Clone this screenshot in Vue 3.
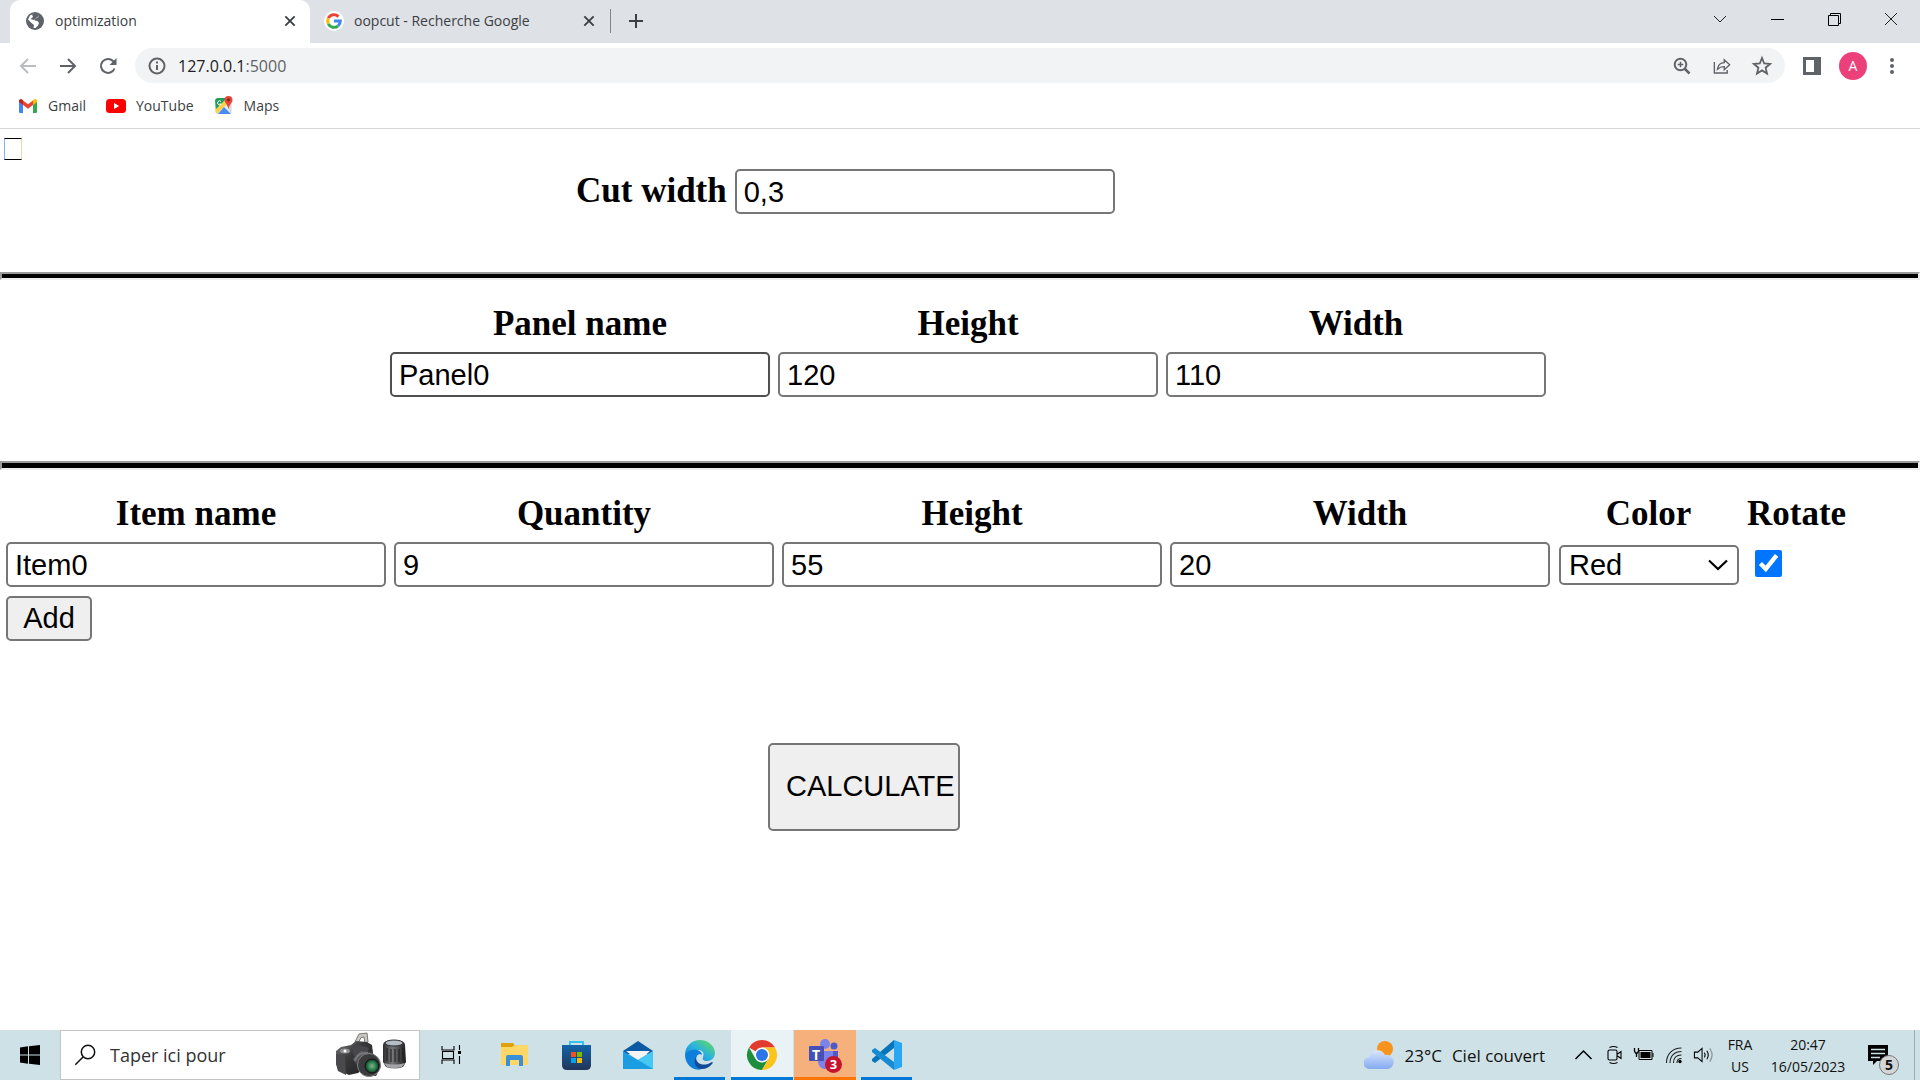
<script setup>
import { ref } from 'vue'

const cutWidth = ref('0,3')
const panel = ref({ name: 'Panel0', height: '120', width: '110' })
const item = ref({ name: 'Item0', quantity: '9', height: '55', width: '20', color: 'Red', rotate: true })
const search = ref('')
const colors = ['Red', 'Green', 'Blue']
</script>

<template>
  <div class="desktop">
    <header class="browser">
      <div class="tabs">
        <div class="tab active">
          <svg class="fav" viewBox="0 0 20 20"><circle cx="10" cy="10" r="9" fill="#5f6368" /><path d="M9 2.6 12.5 2.5 14 5l-2 2-2 .5L9.500 9.500l3 .5 1.500 2-1 2.500-2.500 2.500H8.500l.5-3-2.500-2L3 8.500 5 4.500z" fill="#fff" /><path d="M10 1.500 7 3.500 8 6 5.500 8 9 9 11 7l3-2-1-2.500z" fill="#5f6368" /></svg>
          <span class="title">optimization</span>
          <button class="bare close" aria-label="Close tab"><svg viewBox="0 0 12 12"><path d="m2 2 8 8M10 2l-8 8" stroke="#3c4043" stroke-width="1.600" /></svg></button>
        </div>
        <div class="tab second">
          <svg class="fav" viewBox="0 0 20 20"><circle cx="10" cy="10" r="10" fill="#fff" /><g fill="none" stroke-width="3"><path d="M4.300 7.200A6.300 6.300 0 0 1 14.500 5.600" stroke="#ea4335" /><path d="M4.300 7.200a6.300 6.300 0 0 0 0 5.600" stroke="#fbbc05" /><path d="M4.300 12.800a6.300 6.300 0 0 0 9.800 2" stroke="#34a853" /><path d="M10 10h6.300c0 2-.8 3.700-2.200 4.800" stroke="#4285f4" /></g></svg>
          <span class="title">oopcut - Recherche Google</span>
          <button class="bare close" aria-label="Close tab"><svg viewBox="0 0 12 12"><path d="m2 2 8 8M10 2l-8 8" stroke="#3c4043" stroke-width="1.600" /></svg></button>
        </div>
        <button class="bare plus" aria-label="New tab"><svg viewBox="0 0 16 16"><path d="M8 1v14M1 8h14" stroke="#3c4043" stroke-width="2" /></svg></button>
        <div class="window-controls">
          <button class="bare" aria-label="Search tabs"><svg viewBox="0 0 14 14"><path d="m1 4 6 6 6-6" fill="none" stroke="#222" /></svg></button>
          <button class="bare" aria-label="Minimize"><svg viewBox="0 0 14 14"><path d="M1 7.500h13" stroke="#000" /></svg></button>
          <button class="bare" aria-label="Restore"><svg viewBox="0 0 14 14"><path d="M1.500 3.500h10v10h-10zM3.500 3V1.500h10v10H12" fill="none" stroke="#000" /></svg></button>
          <button class="bare" aria-label="Close"><svg viewBox="0 0 14 14"><path d="m1 1 12 12M13 1 1 13" stroke="#222" /></svg></button>
        </div>
      </div>

      <div class="toolbar">
        <nav class="nav">
          <button class="bare" aria-label="Back"><svg viewBox="0 0 18 18"><path d="M17 9H2M9 2 2 9l7 7" fill="none" stroke="#babcbe" stroke-width="2" /></svg></button>
          <button class="bare" aria-label="Forward"><svg viewBox="0 0 18 18"><path d="M1 9h15M9 2l7 7-7 7" fill="none" stroke="#5f6368" stroke-width="2" /></svg></button>
          <button class="bare" aria-label="Reload"><svg viewBox="0 0 18 18"><path d="M15.500 11.500A7 7 0 1 1 14 4l1.500 2" fill="none" stroke="#5f6368" stroke-width="2" /><path d="M17.500 1v7h-7z" fill="#5f6368" /></svg></button>
        </nav>
        <div class="omnibox">
          <svg class="i17" viewBox="0 0 18 18"><circle cx="9" cy="9" r="7.500" fill="none" stroke="#5f6368" stroke-width="2" /><path d="M9 8v5M9 4.500v2" stroke="#5f6368" stroke-width="2" /></svg>
          <span class="url">127.0.0.1<span class="port">:5000</span></span>
          <div class="actions">
            <button class="bare" aria-label="Zoom"><svg viewBox="0 0 18 18"><circle cx="7.500" cy="7.500" r="5.800" fill="none" stroke="#5f6368" stroke-width="2" /><path d="m11.500 11.500 5 5" stroke="#5f6368" stroke-width="2.500" /><path d="M7.500 4.700v5.600M4.700 7.500h5.600" stroke="#5f6368" stroke-width="1.500" /></svg></button>
            <button class="bare" aria-label="Share"><svg viewBox="0 0 20 18"><path d="M1.500 4.500v12.300h14.300v-3.300" fill="none" stroke="#5f6368" stroke-width="1.500" /><path d="M5 12.500C5.500 8 8.500 5.500 12.500 5.300V2l6 5.700-6 5.500V9.700C9 9.700 7 10.500 5 12.500z" fill="none" stroke="#5f6368" stroke-width="1.500" /></svg></button>
            <button class="bare" aria-label="Bookmark"><svg viewBox="0 0 18 18"><path d="m9 1 2.200 5.500 5.900.4-4.500 3.800 1.400 5.800L9 13.400l-5 3.100 1.400-5.800L.9 6.900l5.900-.4z" fill="none" stroke="#5f6368" stroke-width="1.800" /></svg></button>
          </div>
        </div>
        <button class="bare side" aria-label="Side panel"><svg viewBox="0 0 18 18"><path d="M0 0h18v18H0zM3 3v12h8V3z" fill="#5f6368" fill-rule="evenodd" /></svg></button>
        <button class="bare avatar" aria-label="Profile">A</button>
        <button class="bare dots" aria-label="Menu"><svg viewBox="0 0 18 18"><g fill="#5f6368"><circle cx="9" cy="3" r="2" /><circle cx="9" cy="9" r="2" /><circle cx="9" cy="15" r="2" /></g></svg></button>
      </div>

      <nav class="bookmarks">
        <a href="#gmail"><svg viewBox="0 0 20 20"><path d="M1 4.500 5 7v10H2.300Q1 17 1 15.700z" fill="#4285f4" /><path d="M19 4.500 15 7v10h2.700q1.300 0 1.300-1.300z" fill="#34a853" /><path d="M5 4.500 10 8.300l5-3.800V9l-5 3.800L5 9z" fill="#ea4335" /><path d="M1 6V5c0-2 2-2.700 3.500-1.300L5 4.200V9L1 6z" fill="#c5221f" /><path d="M19 6V5c0-2-2-2.700-3.500-1.300l-.5.5V9l4-3z" fill="#fbbc04" /></svg>Gmail</a>
        <a href="#youtube"><svg viewBox="0 0 20 20"><rect y="3" width="20" height="14" rx="3.500" fill="#f00" /><path d="m8 7 5.200 3L8 13z" fill="#fff" /></svg>YouTube</a>
        <a href="#maps"><svg viewBox="0 0 20 20"><rect x="1" y="2" width="17" height="16" rx="2" fill="#e8eaed" /><path d="M3 2h10L2 15 1 4z" fill="#1e9e5a" /><path d="m1 14 11-11 3 3L3 18z" fill="#fdd148" /><path d="m4 18 6-7 7 7z" fill="#4a8cf5" /><path d="m12 9 5-1v9z" fill="#d5d8dc" /><path d="M14.500 0a4 4 0 0 1 4 4c0 3-3 4-4 9-1-5-4-6-4-9a4 4 0 0 1 4-4z" fill="#e4463a" /><circle cx="14.500" cy="4" r="1.400" fill="#7a211b" /><path d="M7 5.500A2 2 0 1 0 7.200 8H5.500" fill="none" stroke="#fff" /></svg>Maps</a>
      </nav>
    </header>

    <main class="page">
      <span class="missing-glyph" aria-hidden="true"></span>
      <div class="cut">
        <label for="cut">Cut width</label>
        <input id="cut" v-model="cutWidth" class="field" type="text">
      </div>

      <hr>

      <table class="panels">
        <thead>
          <tr>
            <th><label for="p-name">Panel name</label></th>
            <th><label for="p-height">Height</label></th>
            <th><label for="p-width">Width</label></th>
          </tr>
        </thead>
        <tbody>
          <tr>
            <td><input id="p-name" v-model="panel.name" class="field hovered" type="text"></td>
            <td><input id="p-height" v-model="panel.height" class="field" type="text"></td>
            <td><input id="p-width" v-model="panel.width" class="field" type="text"></td>
          </tr>
        </tbody>
      </table>

      <hr class="thick">

      <table class="items">
        <thead>
          <tr>
            <th><label for="i-name">Item name</label></th>
            <th><label for="i-quantity">Quantity</label></th>
            <th><label for="i-height">Height</label></th>
            <th><label for="i-width">Width</label></th>
            <th><label for="i-color">Color</label></th>
            <th><label for="i-rotate">Rotate</label></th>
          </tr>
        </thead>
        <tbody>
          <tr>
            <td><input id="i-name" v-model="item.name" class="field" type="text"></td>
            <td><input id="i-quantity" v-model="item.quantity" class="field" type="text"></td>
            <td><input id="i-height" v-model="item.height" class="field" type="text"></td>
            <td><input id="i-width" v-model="item.width" class="field" type="text"></td>
            <td>
              <div class="select-wrap">
                <select id="i-color" v-model="item.color">
                  <option v-for="c in colors" :key="c">{{ c }}</option>
                </select>
                <svg viewBox="0 0 20 12"><path d="m1 1.500 9 8.500 9-8.500" fill="none" stroke="#000" stroke-width="2.200" /></svg>
              </div>
            </td>
            <td><input id="i-rotate" v-model="item.rotate" class="check" type="checkbox"></td>
          </tr>
          <tr>
            <td colspan="6"><button class="btn add" type="button">Add</button></td>
          </tr>
        </tbody>
      </table>

      <button class="btn calculate" type="button">CALCULATE</button>
    </main>

    <footer class="taskbar">
      <button class="bare start" aria-label="Start"><svg viewBox="0 0 20 20"><path d="m0 2.500 8-1.200v8.200H0zM9 1.200 20 0v9.500H9zM0 10.500h8v8.200l-8-1.200zM9 10.500h11V20L9 18.800z" /></svg></button>
      <div class="searchbox">
        <svg class="lens" viewBox="0 0 22 22"><circle cx="14" cy="8" r="6.700" fill="none" stroke="#111" stroke-width="1.500" /><path d="m9.300 12.700-8 8" stroke="#111" stroke-width="1.500" /></svg>
        <input v-model="search" type="text" placeholder="Taper ici pour" aria-label="Taper ici pour">
        <svg class="camera" viewBox="0 0 72 46">
          <defs>
            <linearGradient id="body" x1="0" y1="0" x2="1" y2="1"><stop offset="0" stop-color="#7a7a7e" /><stop offset=".4" stop-color="#3a3a3d" /><stop offset="1" stop-color="#1c1c1e" /></linearGradient>
            <linearGradient id="barrel" x1="0" x2="1"><stop offset="0" stop-color="#2d2d2f" /><stop offset=".4" stop-color="#77777b" /><stop offset="1" stop-color="#1c1c1d" /></linearGradient>
            <radialGradient id="glass"><stop offset="0" stop-color="#7bb58d" /><stop offset=".6" stop-color="#2a7c4a" /><stop offset="1" stop-color="#10331f" /></radialGradient>
          </defs>
          <path d="m20 10 4-8 8-1 1 9-3 1-1-6-3 .5-3 6z" fill="#c9c8c2" stroke="#77766f" />
          <path d="m1 19 5-4 10-2 5-4 11 1 5 3 1 8-1 10-14 10-9 2-11-5-2-7z" fill="url(#body)" />
          <path d="m1 22 9 2 1 19-8-4-2-7z" fill="#4a4a4e" />
          <path d="M17 16q8-5 17 0l-3 8H19z" fill="#48484c" />
          <ellipse cx="10" cy="19" rx="5" ry="2.500" fill="#929296" /><circle cx="10" cy="19" r="1.500" fill="#fff" />
          <path d="m18 27 8-8 11 1 9 14-5 10-14-3z" fill="url(#body)" />
          <path d="M20 29q2-9 13-8" fill="none" stroke="#77777a" stroke-width="2" />
          <ellipse cx="34" cy="33" rx="11.500" ry="11.500" fill="#3b3b3e" stroke="#828285" />
          <circle cx="37" cy="34" r="7" fill="url(#glass)" stroke="#111" />
          <path d="M48 13q0-5 11-5t11 5l1 17-3 5q-9 3-17 0l-3-5z" fill="url(#barrel)" />
          <ellipse cx="59" cy="11" rx="9" ry="3" fill="#b4bcc4" stroke="#303032" />
          <path d="M52 16v13M56 17v13M60 17v13M64 17v13M68 16v12" stroke="#1d1d1e" />
          <path d="M49 31q10 3 21 0l-3 4q-8 2-15 0z" fill="#a4a4a8" />
        </svg>
      </div>
      <div class="apps">
        <button class="bare app" aria-label="Task view"><svg viewBox="0 0 32 32"><path d="M6 7v4h12V7M6 25v-4h12v4M6.500 12.500h11v7h-11zM23.500 6v5M23.500 17v8" fill="none" stroke="#000" stroke-width="1.100" /><path d="M22 12h3v3h-3z" /></svg></button>
        <button class="bare app" aria-label="File Explorer"><svg viewBox="0 0 32 32"><path d="M3 4h12l2 3-2 3H3z" fill="#dfa20b" /><path d="M3 8h11l3-2h13v19q0 1-1 1H4q-1 0-1-1z" fill="#ffd767" /><path d="M8 27V18q0-2 2-2h13q2 0 2 2v9h-4v-6h-9v6z" fill="#3a8fd8" /></svg></button>
        <button class="bare app" aria-label="Store"><svg viewBox="0 0 32 32"><defs><linearGradient id="bag" x2="0" y2="1"><stop stop-color="#1264a9" /><stop offset="1" stop-color="#233458" /></linearGradient></defs><path d="M10 7V3h13v4" fill="none" stroke="#37c2ee" stroke-width="2" /><path d="M2 6h29v20q0 5-5 5H7q-5 0-5-5z" fill="url(#bag)" /><path d="M11 13h5v5h-5z" fill="#f25022" /><path d="M17 13h5v5h-5z" fill="#7fba00" /><path d="M11 19h5v5h-5z" fill="#00a4ef" /><path d="M17 19h5v5h-5z" fill="#ffb900" /></svg></button>
        <button class="bare app" aria-label="Mail"><svg viewBox="0 0 32 32"><path d="m1 12 15-10 15 10-2 3H3z" fill="#0c59a4" /><path d="M4 12h24L17 22z" fill="#f4f4f4" /><path d="M1 12v18h30V12L16 21z" fill="#1b9de2" /><path d="M31 12v18L16 21z" fill="#43c9f4" /></svg></button>
        <button class="bare app running" aria-label="Edge"><svg viewBox="0 0 32 32"><defs><linearGradient id="edge-a" x1="0" y1="1" x2="1" y2="0"><stop offset="0" stop-color="#0c7bd0" /><stop offset=".5" stop-color="#2bb3dd" /><stop offset="1" stop-color="#6be04e" /></linearGradient></defs><path d="M1 16C1 7 8 1 16 1s15 6 15 13c0 5-4 8-8 8-4 0-5-2-4-4 2-4-1-7-5-7C7 11 2 14 1 16z" fill="url(#edge-a)" /><path d="M1 16c1-3 6-6 12-5 3 .5 5 3 5 5-7-2-9 9 0 14-9 3-17-5-17-14z" fill="#0d7fda" /><path d="M18 16c3 2-2 4 1 7 4 2 8 0 11-1l-2 3c-8 4-17-1-15-8 1-2 3-2 5-1z" fill="#cde1e6" /><path d="M12 18c0 6 5 9 12 7l4-2c1 0 1 1 0 2-4 5-10 6-14 4-4-3-4-8-2-11z" fill="#114c97" /></svg></button>
        <button class="bare app running focused" aria-label="Chrome"><svg viewBox="0 0 32 32"><path d="M16 16 3 8.500A15 15 0 0 1 29 8.500H16z" fill="#e33b2e" /><path d="M16 16 9.500 19.800 3 8.500A15 15 0 0 0 16 31l6.500-11.200z" fill="#1e8e3e" /><path d="M16 8.500h13A15 15 0 0 1 16 31l6.500-11.200z" fill="#fcc31d" /><circle cx="16" cy="16" r="7.500" fill="#fff" /><circle cx="16" cy="16" r="6" fill="#2b75e8" /></svg></button>
        <button class="bare app alert" aria-label="Teams"><svg viewBox="0 0 36 36"><circle cx="18" cy="7" r="5" fill="#7b83eb" /><circle cx="27" cy="9" r="3.500" fill="#5059c9" /><path d="M22 14h9v10q-2 5-7 4z" fill="#5059c9" /><path d="M11 14h15v12q-2 6-8 6t-7-7z" fill="#7b83eb" /><rect x="2" y="9" width="15" height="15" rx="1" fill="#464eb8" /></svg><span class="team">T</span><span class="count">3</span></button>
        <button class="bare app running" aria-label="Visual Studio Code"><svg viewBox="0 0 32 32"><path d="M23 1 31 4v24l-8 3z" fill="#2aa7f2" /><path d="M23 1v8L4 24l-3-2v-2z" fill="#0874b9" /><path d="M23 31v-8L4 9 1 11v2z" fill="#168bd2" /></svg></button>
      </div>
      <div class="weather">
        <svg viewBox="0 0 30 28"><defs><linearGradient id="cloud" x2="0" y2="1"><stop stop-color="#d9e6fd" /><stop offset="1" stop-color="#84aaf0" /></linearGradient></defs><circle cx="21" cy="8" r="8" fill="#f8931d" /><path d="M6 28a6 6 0 0 1-1-12 8.500 8.500 0 0 1 16-2 7 7 0 0 1 3 14z" fill="url(#cloud)" /></svg>
        <span>23°C</span><span>Ciel couvert</span>
      </div>
      <div class="tray">
        <svg viewBox="0 0 20 20"><path d="m2 14 8-8 8 8" fill="none" stroke="#000" stroke-width="1.500" /></svg>
        <svg viewBox="0 0 20 20"><path d="M6 2.500q4-2 8 0M6 17.500q4 2 8 0M6 5h6q1.500 0 1.500 1.500v7q0 1.500-1.500 1.500H6q-1.500 0-1.500-1.500v-7Q4.500 5 6 5zM14 9l3.500-2.500v7L14 11" fill="none" stroke="#000" stroke-width="1.100" /></svg>
        <svg viewBox="0 0 20 20"><path d="M5.500 5.500h13v9h-13zM19.500 8v4" fill="none" stroke="#000" /><path d="M7 7h10v6H7z" /><path d="M1 3v3l1 2h2l1-2V3M3 8v4" fill="none" stroke="#000" stroke-width="1.300" /></svg>
        <svg viewBox="0 0 20 20"><path d="M3 18C3 9 9 3 18 3M6.500 18C6.500 11 11 6.500 18 6.500M10 18c0-5 3-8 8-8M13.500 18q0-4.500 4.500-4.500" fill="none" stroke="#222" stroke-width="1.100" /><circle cx="16.500" cy="16.500" r="1.700" /></svg>
        <svg viewBox="0 0 22 20"><path d="M1.500 7v6H5l4.500 4V3L5 7z" fill="none" stroke="#000" stroke-width="1.100" /><path d="M12 7.500q1.500 2.500 0 5M14.500 5.500q3 4.500 0 9" fill="none" stroke="#000" stroke-width="1.100" /><path d="M17.500 3q5 7 0 14" fill="none" stroke="#8a979b" stroke-width="1.300" /></svg>
      </div>
      <div class="stack lang"><span>FRA</span><span>US</span></div>
      <div class="stack clock"><span>20:47</span><span>16/05/2023</span></div>
      <button class="bare notes" aria-label="Notifications"><svg viewBox="0 0 20 20"><path d="M0 0h20v16H9l-4 4v-4H0z" /><path d="M3 4.500h14M3 8.500h14M3 12.500h9" stroke="#cde1e6" stroke-width="1.300" /></svg><span class="badge">5</span></button>
    </footer>
  </div>
</template>

<style>
body { margin: 0; background: #fff; }
</style>

<style scoped>
.desktop { display: flex; flex-direction: column; min-height: 100vh; color: #000; }
svg { display: block; }
.bare { display: flex; align-items: center; justify-content: center; margin: 0; padding: 0; border: 0; background: none; font: inherit; color: inherit; }

/* browser frame */
.browser { font-family: "Open Sans", "Noto Sans", sans-serif; font-size: 14px; color: #3c4043; border-bottom: 1px solid #d5d7da; }
.tabs { display: flex; height: 43px; padding-left: 10px; background: #dee1e6; }
.tab { display: flex; align-items: center; box-sizing: border-box; width: 300px; height: 43px; padding: 0 12px 2px 15px; }
.tab.active { border-radius: 10px 10px 0 0; background: #fff; }
.tab.second { padding-left: 14px; padding-right: 13px; }
.fav { width: 20px; height: 20px; margin-right: 10px; }
.title { flex: 1; white-space: nowrap; }
.close svg { width: 14px; height: 14px; }
.close { width: 16px; height: 16px; }
.plus { width: 50px; height: 24px; margin-top: 9px; border-left: 1px solid #80868b; }
.plus svg { width: 16px; height: 16px; }
.window-controls { display: flex; margin-left: auto; height: 37px; padding-right: 1px; }
.window-controls .bare { width: 57px; }
.window-controls svg { width: 14px; height: 14px; }
.toolbar { display: flex; align-items: center; height: 45px; padding-right: 10px; }
.nav { display: flex; width: 135px; padding-left: 8px; box-sizing: border-box; }
.nav .bare { width: 40px; height: 32px; }
.nav svg, .i17 { width: 18px; height: 18px; }
.omnibox { display: flex; flex: 1; align-items: center; height: 35px; padding: 0 3px 0 13px; border-radius: 18px; background: #f1f3f4; }
.url { margin-left: 12px; font-size: 16px; color: #202124; }
.port { color: #5f6368; }
.actions { display: flex; margin-left: auto; }
.actions .bare { width: 40px; }
.actions svg { width: 18px; height: 18px; overflow: visible; }
.side { width: 54px; }
.side svg, .dots svg { width: 18px; height: 18px; }
.avatar { width: 28px; height: 28px; border-radius: 50%; background: #ec407a; color: #fff; font-size: 14px; }
.dots { width: 36px; margin-left: 7px; }
.bookmarks { display: flex; align-items: center; gap: 20px; height: 35px; padding: 0 18px 5px; }
.bookmarks a { display: flex; align-items: center; gap: 10px; color: #3c4043; text-decoration: none; }
.bookmarks svg { width: 20px; height: 20px; }

/* page */
.page { flex: 1; font-family: "Liberation Serif", "Times New Roman", serif; font-size: 35px; line-height: 39px; }
.missing-glyph { display: block; box-sizing: border-box; width: 18px; height: 22px; margin: 9px 0 9px 4px; border: 1px solid; border-color: #000 #f3d5a8 #000 #7db4f5; }
.cut { display: flex; align-items: flex-start; gap: 8px; margin-left: 30%; font-weight: bold; }
.cut label { padding-top: 2px; }
.field { display: block; box-sizing: border-box; width: 380px; height: 45px; margin: 0; padding: 1px 7px 0; border: 2px solid #767676; border-radius: 5px; background: #fff; color: #000; font: 29px "Liberation Sans", Arial, sans-serif; outline: none; }
.hovered { border-color: #4f4f4f; }
hr { height: 4px; margin: 58px 0 17px; border: 2px solid; border-color: #9a9a9a #eee #eee #9a9a9a; background: #000; }
hr.thick { height: 5px; margin-top: 57px; }
table { border-collapse: separate; border-spacing: 4px 5px; }
th, td { padding: 2px; }
th { text-align: center; font-weight: bold; }
.panels { margin-left: 20%; }
.select-wrap { position: relative; width: 180px; margin-left: 1px; }
.select-wrap svg { position: absolute; right: 11px; top: 14px; width: 20px; height: 12px; pointer-events: none; }
select { display: block; appearance: none; box-sizing: border-box; width: 180px; height: 40px; margin: 0; padding: 0 8px; border: 2px solid #767676; border-radius: 5px; background: #fff; color: #000; font: 29px "Liberation Sans", Arial, sans-serif; }
.check { display: block; width: 27px; height: 27px; margin: 0 0 3px 8px; accent-color: #0075ff; }
.btn { display: block; box-sizing: border-box; border: 2px solid #767676; border-radius: 5px; background: #efefef; color: #000; font: 29px "Liberation Sans", Arial, sans-serif; white-space: nowrap; }
.add { width: 86px; height: 45px; padding: 0; }
.calculate { width: 192px; height: 88px; margin: 95px 0 0 40%; padding: 0 0 2px 16px; text-align: left; }

/* taskbar */
.taskbar { display: flex; align-items: stretch; height: 50px; background: #cde1e6; font-family: "Open Sans", "Noto Sans", sans-serif; font-size: 18px; color: #111; }
.start { width: 60px; }
.start svg { width: 20px; height: 20px; }
.searchbox { display: flex; align-items: center; box-sizing: border-box; width: 360px; padding: 0 12px 0 13px; border: 1px solid #c4c4c4; background: #fff; }
.lens { width: 22px; height: 22px; }
.searchbox input { flex: 1; min-width: 0; margin-left: 14px; padding: 0; border: 0; outline: none; background: none; font: inherit; }
.searchbox input::placeholder { color: #333; opacity: 1; }
.camera { width: 72px; height: 46px; }
.apps { display: flex; margin-left: 1px; }
.app { position: relative; width: 62px; box-sizing: border-box; }
.app svg { width: 32px; height: 32px; }
.running::after { content: ""; position: absolute; left: 5px; right: 6px; bottom: 0; height: 3px; background: #0078d7; }
.focused { background: #e9f2f4; }
.focused::after { left: 0; right: 0; }
.alert { margin-left: 1px; background: #f5b07b; border-bottom: 3px solid #ff7300; padding-top: 3px; }
.alert svg { width: 36px; height: 36px; }
.team { position: absolute; left: 18px; top: 17px; font-size: 14px; line-height: 16px; font-weight: bold; color: #fff; }
.count { position: absolute; left: 31px; top: 26px; width: 17px; height: 17px; border-radius: 50%; background: #c4142e; color: #fff; font-size: 13px; line-height: 17px; font-weight: bold; }
.weather { display: flex; align-items: center; gap: 10px; margin-left: auto; font-size: 17px; }
.weather svg { width: 30px; height: 28px; }
.tray { display: flex; align-items: center; gap: 9px; margin-left: 28px; }
.tray svg { width: 21px; height: 20px; }
.stack { display: flex; flex-direction: column; justify-content: center; align-items: center; font-size: 14px; line-height: 22px; padding-top: 2px; }
.lang { width: 52px; }
.clock { width: 84px; }
.notes { position: relative; width: 65px; margin-right: 5px; border-right: 1px solid #9cb0b5; }
.notes svg { width: 20px; height: 20px; margin-right: 8px; }
.badge { position: absolute; right: 15px; bottom: 5px; width: 18px; height: 18px; border: 1px solid #777; border-radius: 50%; background: #d3d6d7; font-size: 14px; line-height: 17px; font-weight: bold; }
</style>
